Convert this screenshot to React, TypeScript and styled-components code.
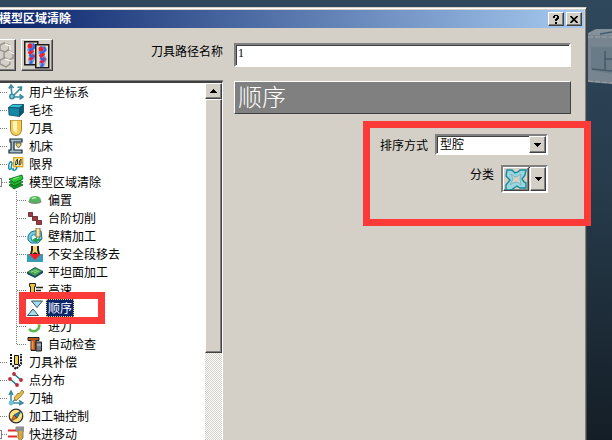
import React from "react";
import styled, { createGlobalStyle, css } from "styled-components";

const Global = createGlobalStyle`
  * { box-sizing: border-box; }
  body { margin: 0; overflow: hidden; }
  body, button, input, select {
    font-family: "Liberation Sans", "Noto Sans CJK SC", sans-serif;
    font-size: 12px;
    color: #000;
  }
  button { padding: 0; border: 0; background: none; }
`;

const face = "#d4d0c8";

const raised = css`
  background: ${face};
  border: 1px solid;
  border-color: #fff #404040 #404040 #fff;
  box-shadow: inset -1px -1px 0 #808080;
`;

const sunken = css`
  border: 2px solid;
  border-color: #808080 #fff #fff #808080;
  box-shadow: inset 1px 1px 0 #404040;
`;

const Desktop = styled.div`
  position: relative;
  height: 100vh;
  display: flex;
  padding: 7px 25px 0 0;
  background: linear-gradient(#30485c, #263a4a 45%, #141e26);
  overflow: hidden;
`;

const ViewCube = styled.svg`
  position: absolute;
  top: 26px;
  right: 0;
`;

const Dialog = styled.main`
  position: relative;
  flex: 1;
  min-width: 0;
  display: flex;
  flex-direction: column;
  background: ${face};
  border-top: 1px solid ${face};
  border-right: 1px solid #404040;
  box-shadow: inset 0 1px 0 #fff, inset -1px 0 0 #808080;
  padding: 2px 2px 0 0;
`;

const TitleBar = styled.header`
  flex: none;
  height: 18px;
  display: flex;
  align-items: center;
  gap: 2px;
  padding-right: 2px;
  background: linear-gradient(90deg, #0a246a, #a6caf0);
`;

const Title = styled.h1`
  flex: 1;
  margin: 0 0 0 -1px;
  font-size: 12px;
  line-height: 18px;
  font-weight: 700;
  color: #fff;
`;

const CaptionButton = styled.button`
  ${raised}
  width: 16px;
  height: 14px;
  display: grid;
  place-items: center;
`;

const Toolbar = styled.div`
  flex: none;
  height: 53px;
  display: grid;
  grid-template-columns: 223px 1fr;
  column-gap: 11px;
  padding-right: 13px;
`;

const ToolGroup = styled.div`
  display: flex;
  align-items: flex-start;
  gap: 5px;
  padding-top: 11px;
  margin-left: -16px;
`;

const ToolButton = styled.button`
  ${raised}
  flex: none;
  width: 32px;
  height: 32px;
  display: grid;
  place-items: center;
`;

const NameLabel = styled.label`
  margin: 6px 0 0 auto;
  line-height: 14px;
`;

const NameInput = styled.input`
  ${sunken}
  width: 100%;
  height: 24px;
  margin-top: 15px;
  padding: 0 2px 4px;
  background: #fff;
  font-family: "Liberation Serif", serif;
  outline: none;
`;

const Body = styled.div`
  flex: 1;
  min-height: 0;
  display: grid;
  grid-template-columns: 223px 1fr;
  column-gap: 11px;
`;

const TreePane = styled.nav`
  position: relative;
  display: flex;
  min-height: 0;
  background: #fff;
  border: solid;
  border-width: 2px 1px 0 0;
  border-color: #404040 #fff;
  box-shadow: 0 -1px 0 #808080;
`;

const Tree = styled.ul`
  flex: 1;
  margin: 0;
  padding: 0;
  list-style: none;
  overflow: hidden;
`;

const Node = styled.li<{ $child?: boolean; $last?: boolean }>`
  height: 18px;
  display: flex;
  align-items: center;
  ${(p) =>
    p.$child &&
    css`
      margin-left: 16px;
      padding-left: 1px;
      background: repeating-linear-gradient(#808080 0 1px, #fff 1px 2px) 0 0 / 1px
        ${p.$last ? "9px" : "18px"} no-repeat;
    `}
`;

const Branch = styled.span<{ $wide?: boolean }>`
  flex: none;
  width: ${(p) => (p.$wide ? 10 : 8)}px;
  height: 1px;
  background: repeating-linear-gradient(90deg, #808080 0 1px, #fff 1px 2px);
`;

const Expander = styled.button`
  flex: none;
  width: 9px;
  height: 9px;
  margin-left: -7px;
  border: 1px solid #808080;
  background: #fff;
  & + span { width: 6px; }
`;

const Item = styled.button`
  display: flex;
  align-items: center;
  gap: 3px;
  height: 18px;
  white-space: nowrap;
`;

const ItemText = styled.span<{ $selected?: boolean }>`
  padding: 2px 2px 0;
  line-height: 16px;
  ${(p) =>
    p.$selected &&
    css`
      background: #0a246a;
      color: #fff;
      outline: 1px dotted #e8d078;
      outline-offset: -1px;
    `}
`;

const ScrollBar = styled.div`
  flex: none;
  width: 17px;
  display: flex;
  flex-direction: column;
  background: repeating-conic-gradient(#fff 0 25%, #d4d0c8 0 50%) 0 0 / 2px 2px;
`;

const ScrollButton = styled.button`
  ${raised}
  height: 16px;
  display: grid;
  place-items: center;
`;

const ScrollThumb = styled.div`
  ${raised}
  height: 254px;
`;

const Page = styled.section`
  padding-right: 13px;
`;

const PageTitle = styled.h2`
  height: 33px;
  margin: 0;
  padding-left: 3px;
  background: #808080;
  border: 1px solid;
  border-color: #fff #404040 #404040 #fff;
  color: #fff;
  font-size: 24px;
  font-weight: 300;
  font-family: "Noto Sans CJK SC", sans-serif;
  line-height: 28px;
`;

const Settings = styled.div`
  position: relative;
  display: flex;
  flex-direction: column;
  align-items: flex-end;
  gap: 9px;
  padding: 20px 23px 0 0;
`;

const Field = styled.div`
  display: flex;
  align-items: flex-start;
  gap: 7px;
`;

const FieldLabel = styled.label`
  padding-top: 2px;
  line-height: 20px;
`;

const IconFieldLabel = styled(FieldLabel)`
  padding-top: 0;
`;

const SelectBox = styled.div`
  ${sunken}
  width: 113px;
  height: 21px;
  display: grid;
  grid-template-columns: 1fr 17px;
  background: #fff;
`;

const Select = styled.select`
  grid-area: 1 / 1 / 2 / 3;
  appearance: none;
  border: 0;
  background: transparent;
  padding: 0 0 0 3px;
  height: 17px;
  line-height: 16px;
  outline: none;
`;

const DropMark = styled.span`
  ${raised}
  grid-area: 1 / 2;
  display: grid;
  place-items: center;
  pointer-events: none;
`;

const SplitButton = styled.div`
  ${sunken}
  width: 47px;
  height: 28px;
  display: flex;
  gap: 1px;
`;

const SplitPart = styled.button<{ $main?: boolean }>`
  ${raised}
  flex: ${(p) => (p.$main ? "1" : "0 0 16px")};
  display: grid;
  place-items: center;
`;

const Mark = styled.div<{ $area: "settings" | "node" }>`
  position: absolute;
  border: 7px solid #fc3b38;
  pointer-events: none;
  ${(p) =>
    p.$area === "settings"
      ? css`
          top: 7px;
          right: -20px;
          width: 228px;
          height: 105px;
        `
      : css`
          top: 209px;
          left: 19px;
          width: 86px;
          height: 32px;
        `}
`;

const Triangle = ({ up }: { up?: boolean }) => (
  <svg width="7" height="4" viewBox="0 0 7 4" shapeRendering="crispEdges" aria-hidden>
    <path d={up ? "M3 0h1v1h1v1h1v1h1v1H0V3h1V2h1V1h1z" : "M0 0h7v1H6v1H5v1H4v1H3V3H2V2H1V1H0z"} />
  </svg>
);

const glyphs: Record<string, React.ReactNode> = {
  axes: (
    <g fill="none" stroke="#3a8ba2" strokeWidth="1.600">
      <path d="M4 12 3 2M.8 4.500 3 1l2.500 3M5 12l8-8M9.500 3.200l4-.2-.5 4M4 13h10M11.500 10.500 15 13l-3.500 2.300" />
      <circle cx="4" cy="12.500" r="2.200" fill="#8cd0df" />
    </g>
  ),
  block: (
    <g stroke="#064f65" strokeWidth=".8">
      <path d="M.5 5.500 4.500 2.500h11l-4 3.500z" fill="#38c0d8" />
      <path d="M.5 5.500 11.500 6v8.500L1 13z" fill="#1487a4" />
      <path d="m11.500 6 4-3.500v8l-4 4z" fill="#075b75" />
    </g>
  ),
  cutter: (
    <g>
      <path d="M2.500 0h11v9q0 6-5.500 6.500Q2.500 15 2.500 9z" fill="#f5cd58" stroke="#a1842f" />
      <path d="M5 1h4v12Q5 12 5 8z" fill="#fff5b8" />
    </g>
  ),
  machine: (
    <g>
      <path d="M2 1h12v3H6v8h8v3H1v-3h2V4H2z" fill="#a7bdc6" stroke="#122a35" strokeWidth="1.200" />
      <path d="M8 5h5v2l-2.500 3L8 7z" fill="#ead368" stroke="#333" strokeWidth=".7" />
    </g>
  ),
  limits: (
    <g fill="none">
      <rect x="5.700" y="1.700" width="9" height="9" fill="#fff1a5" stroke="#e0a81b" strokeWidth="1.400" />
      <path d="M7.500 9q0-5 2-6v5zM11 9q0-5 2-6v5z" stroke="#333" />
      <path d="M1 8q2-4 3-1L3 13q-3 2-2-5M5 12v2q3 1 4-3" stroke="#168bad" strokeWidth="1.500" />
    </g>
  ),
  layers: (
    <g stroke="#075f11" strokeWidth=".8">
      <path d="m1 11 5 4 9-4-5-3z" fill="#139725" />
      <path d="m1 8 5 4 9-4-5-3z" fill="#27b536" />
      <path d="m1 5 5 4 9-4-1-4z" fill="#2ec63d" />
      <path d="m5 5 6-2" stroke="#a0f286" />
    </g>
  ),
  dome: (
    <g>
      <ellipse cx="8" cy="9.500" rx="6.500" ry="2.500" fill="#7d8b7d" />
      <path d="M2 9q0-5 6-5t6 5q-6 3-12 0z" fill="#55b55c" />
      <path d="M5 7q1-2 4-1" stroke="#b7edb4" strokeWidth="1.500" fill="none" />
    </g>
  ),
  steps: <path d="M1.500 2.500h4v4h5v4h4v4h-5v-4h-4v-4h-4z" fill="#9c3b3f" stroke="#5c1c20" strokeWidth=".8" />,
  wall: (
    <g>
      <path d="M1 8q2-5 6-5h7l1 8-4 4H4l-3-3z" fill="#77cbe0" stroke="#14728c" />
      <path d="M4 10q0-4 4-3l5 1-2 5H5z" fill="#d4f5fb" stroke="#1c88a1" />
      <path d="M9 0h4v9H9z" fill="#f6e4a8" stroke="#8b6a28" strokeWidth=".9" />
      <path d="m5 12 5-3v2h4v2h-4v2z" fill="#279e51" />
    </g>
  ),
  unsafe: (
    <g>
      <path d="M0 8h16v8H0z" fill="#3a9db7" />
      <path d="M2 8h12l-6 6z" fill="#f51f27" />
      <path d="M4 0h8v4l1 4H3l1-4z" fill="#2b251c" />
      <path d="M6 0h4v4l1 4-3-2-3 2 1-4z" fill="#f7d875" />
    </g>
  ),
  flat: (
    <g>
      <path d="m0 8 8-5 8 4v2l-8 5-8-4z" fill="#174e67" />
      <path d="m1 8 7-4 7 3-7 5z" fill="#46a34d" />
      <path d="m4 8 6-2M7 9l5-2" stroke="#91df8a" />
    </g>
  ),
  speed: (
    <g stroke="#292313">
      <path d="M2.500 1.500h6v3h-1v9l-2 2-2-2v-9h-1z" fill="#ecc044" />
      <path d="M9 5.500h7M9 8.500h5M9 11.500h3" strokeWidth="1.300" />
    </g>
  ),
  order: (
    <g fill="#a5dcee" stroke="#22404c" strokeWidth=".9">
      <path d="M4.500 1h11L10 7.500z" />
      <path d="M.5 15.500 6 9l5.500 6.500z" />
    </g>
  ),
  lead: (
    <g fill="none" strokeWidth="2.500">
      <path d="M11 4q3 5-1 8-4 3-8-1" stroke="#5cba4f" />
      <path d="M8 2q3-1 4 5" stroke="#e8bf36" />
    </g>
  ),
  check: (
    <g stroke="#222">
      <path d="M1 1.500h11v3H9v10H4v-10H1z" fill="#b8571f" />
      <path d="M9 6h5.500v9H9z" fill="#747c84" />
      <path d="M5.500 5v8" stroke="#ff913c" strokeWidth="2" />
      <path d="M10 9h4" stroke="#d8dddf" />
    </g>
  ),
  compensate: (
    <g fill="none" stroke="#111">
      <path d="M3 0v10l5 5 5-5V0" strokeWidth="2" strokeDasharray="2 1" />
      <path d="M6.500 1.500h4v9h-4z" fill="#f4d23c" />
    </g>
  ),
  points: (
    <g>
      <path d="m2 7 7 6M6 2l7 6" stroke="#187e96" strokeWidth="1.600" />
      {[[2, 7], [9, 13], [6, 2], [13, 8]].map(([x, y]) => (
        <circle key={x} cx={x} cy={y} r="1.900" fill="#b82f38" />
      ))}
    </g>
  ),
  toolAxis: (
    <g>
      <path d="M3 13V2M1 5l2-4 2 4M3 13h11M11 10.500 15 13l-4 2M3 13l6-5" fill="none" stroke="#3a8ba2" strokeWidth="1.500" />
      <path d="m6 8 4-5 1 1 3-4 2 2-3 4-5 5z" fill="#eabe42" stroke="#876d2e" strokeWidth=".8" />
      <circle cx="3" cy="13" r="2.400" fill="#72c1d4" />
    </g>
  ),
  compass: (
    <g>
      <circle cx="8" cy="8" r="6.800" fill="#ffe07a" stroke="#2a2b30" strokeWidth="1.200" />
      <path d="m13 3-4 7-3-3z" fill="#1684c7" stroke="#222" strokeWidth=".6" />
      <path d="m3 13 3-6 3 3z" fill="#e86a24" stroke="#222" strokeWidth=".6" />
    </g>
  ),
  rapid: (
    <g>
      <path d="M0 4.500h9M0 10.500h9" stroke="#e62c2c" strokeWidth="2" />
      <path d="M8 1h8v4h-1v7l-3 3-2-3V5H8z" fill="#dba934" stroke="#68645a" strokeWidth=".8" />
      <path d="M8 1h8v4H8z" fill="#8e9295" />
    </g>
  ),
};

const NodeIcon = ({ name }: { name: string }) => (
  <svg width="16" height="16" viewBox="0 0 16 16" aria-hidden>
    {glyphs[name]}
  </svg>
);

type Entry = {
  icon: string;
  text: string;
  child?: boolean;
  last?: boolean;
  expander?: boolean;
  selected?: boolean;
};

const entries: Entry[] = [
  { icon: "axes", text: "用户坐标系" },
  { icon: "block", text: "毛坯" },
  { icon: "cutter", text: "刀具" },
  { icon: "machine", text: "机床" },
  { icon: "limits", text: "限界" },
  { icon: "layers", text: "模型区域清除", expander: true },
  { icon: "dome", text: "偏置", child: true },
  { icon: "steps", text: "台阶切削", child: true },
  { icon: "wall", text: "壁精加工", child: true },
  { icon: "unsafe", text: "不安全段移去", child: true },
  { icon: "flat", text: "平坦面加工", child: true },
  { icon: "speed", text: "高速", child: true },
  { icon: "order", text: "顺序", child: true, selected: true },
  { icon: "lead", text: "进刀", child: true },
  { icon: "check", text: "自动检查", child: true, last: true },
  { icon: "compensate", text: "刀具补偿" },
  { icon: "points", text: "点分布" },
  { icon: "toolAxis", text: "刀轴" },
  { icon: "compass", text: "加工轴控制" },
  { icon: "rapid", text: "快进移动", expander: true },
];

const GearIcon = () => (
  <svg width="28" height="26" viewBox="0 0 28 26" fill="none" stroke="#98958e" strokeWidth="1.400" aria-hidden>
    <path d="m18 1 5 2v4l-4 3-5-2V3zM22 8l5 3v5l-4 2-5-3v-4zM18 16l6 2v4l-4 3-6-3v-4zM9 3 3 7v5l5 3 5-3V7zM8 15l-4 3v4l5 3 5-3" />
    <path d="m19 2 5 2v4M23 9l5 3M19 17l6 2" stroke="#f3f1ed" />
  </svg>
);

const CutterBlade = ({ x, y }: { x: number; y: number }) => (
  <g transform={`translate(${x} ${y})`}>
    <rect x=".75" y=".75" width="13" height="23" fill="#e9dfc0" stroke="#1b1b1b" strokeWidth="1.500" />
    <path d="M5 2h5l2 4-3 4 3 5-3 8H5l-1-5 2-4-3-5z" fill="#7a9fe8" />
    <circle cx="6" cy="5" r="2.500" fill="#ee1f30" />
    <path d="m9 9-4 4M10 14l-4 5" stroke="#ee1f30" strokeWidth="3.500" />
    <path d="M9 3q3 3-1 5L5 9M5 14l5 2M8 20l-2 3" fill="none" stroke="#3564e6" strokeWidth="2.200" />
  </g>
);

const PathsIcon = () => (
  <svg width="28" height="28" viewBox="0 0 28 28" aria-hidden>
    <CutterBlade x={1} y={0} />
    <CutterBlade x={12} y={3} />
  </svg>
);

const PocketIcon = () => (
  <svg width="22" height="21" viewBox="0 0 22 21" aria-hidden>
    <path d="M2 1h5l3 3 3-1 2-2h6l-1 5-3 4 2 3 2 1v5h-6l-3-2-3 2-3 2H1v-5l4-5-4-4z" fill="#9bd6e0" stroke="#168996" strokeWidth="1.400" />
    <path d="m6 5 4 3 3-1 3-2-1 5 1 6-4-3-4 1-3 2 3-6z" fill="#d4d0c8" stroke="#5fb4bd" strokeWidth=".8" />
  </svg>
);

export default function App() {
  return (
    <Desktop>
      <Global />
      <ViewCube width="24" height="60" viewBox="0 0 24 60" aria-hidden>
        <path d="M0 7 8 3h16v7H0z" fill="#84919b" />
        <path d="M0 9h24v49L0 56z" fill="#76858f" />
        <path d="M3 21h21v27L3 44z" fill="#6a7b88" />
        <path d="M17 25v19M17 33h7M4 43l20 2M12 8l12-2" fill="none" stroke="#465a6a" strokeWidth="1.500" />
        <path d="M0 11h24M0 55l24 2" stroke="#a2a5a6" strokeDasharray="5 2" />
      </ViewCube>
      <Dialog>
        <TitleBar>
          <Title>模型区域清除</Title>
          <CaptionButton aria-label="帮助">
            <svg width="8" height="9" viewBox="0 0 8 9" shapeRendering="crispEdges" aria-hidden>
              <path d="M2 0h4v1h1v3H6v1H5v1H3V4h1V3h1V1H3v2H1V1h1zM3 7h2v2H3z" />
            </svg>
          </CaptionButton>
          <CaptionButton aria-label="关闭">
            <svg width="8" height="7" viewBox="0 0 8 7" stroke="#000" strokeWidth="1.600" aria-hidden>
              <path d="m.5 0 7 7m0-7-7 7" />
            </svg>
          </CaptionButton>
        </TitleBar>
        <Toolbar>
          <ToolGroup>
            <ToolButton aria-label="设置"><GearIcon /></ToolButton>
            <ToolButton aria-label="复制刀具路径"><PathsIcon /></ToolButton>
            <NameLabel htmlFor="path-name">刀具路径名称</NameLabel>
          </ToolGroup>
          <NameInput id="path-name" defaultValue="1" />
        </Toolbar>
        <Body>
          <TreePane>
            <Tree>
              {entries.map((e) => (
                <Node key={e.text} $child={e.child} $last={e.last}>
                  {e.expander && <Expander aria-label="展开" />}
                  <Branch $wide={e.child} />
                  <Item>
                    <NodeIcon name={e.icon} />
                    <ItemText $selected={e.selected}>{e.text}</ItemText>
                  </Item>
                </Node>
              ))}
            </Tree>
            <ScrollBar>
              <ScrollButton aria-label="向上滚动"><Triangle up /></ScrollButton>
              <ScrollThumb />
            </ScrollBar>
            <Mark $area="node" />
          </TreePane>
          <Page>
            <PageTitle>顺序</PageTitle>
            <Settings>
              <Field>
                <FieldLabel htmlFor="sort-mode">排序方式</FieldLabel>
                <SelectBox>
                  <Select id="sort-mode">
                    <option>型腔</option>
                  </Select>
                  <DropMark><Triangle /></DropMark>
                </SelectBox>
              </Field>
              <Field>
                <IconFieldLabel htmlFor="category">分类</IconFieldLabel>
                <SplitButton>
                  <SplitPart $main id="category"><PocketIcon /></SplitPart>
                  <SplitPart aria-label="更多分类"><Triangle /></SplitPart>
                </SplitButton>
              </Field>
              <Mark $area="settings" />
            </Settings>
          </Page>
        </Body>
      </Dialog>
    </Desktop>
  );
}
